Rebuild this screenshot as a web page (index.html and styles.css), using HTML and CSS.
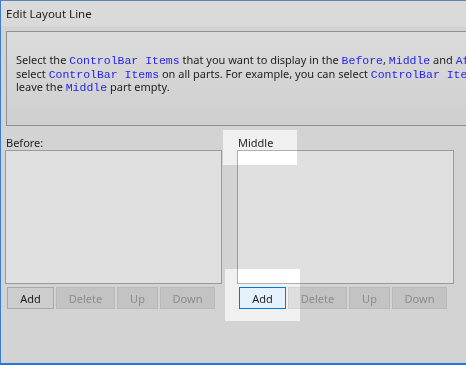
FILE: index.html
```html
<!DOCTYPE html>
<html lang="en">
<head>
    <meta charset="UTF-8">
    <title>Edit Layout Line</title>
    <link rel="stylesheet" href="styles.css">
</head>
<body>
    <div class="window">
        <div class="titlebar">Edit Layout Line</div>
        <div class="info">
            <p>Select the <code>ControlBar Items</code> that you want to display in the <code>Before</code>, <code>Middle</code> and <code>After</code> parts. You can also<br>select <code>ControlBar Items</code> on all parts. For example, you can select <code>ControlBar Items</code> in the <code>Before</code> and <code>After</code> parts and<br>leave the <code>Middle</code> part empty.</p>
        </div>
        <div class="parts">
            <div class="part">
                <div class="part-label">Before:</div>
                <div class="listbox"></div>
                <div class="buttons">
                    <button class="btn btn-add">Add</button>
                    <button class="btn btn-delete" disabled>Delete</button>
                    <button class="btn btn-up" disabled>Up</button>
                    <button class="btn btn-down" disabled>Down</button>
                </div>
            </div>
            <div class="part">
                <div class="part-label">Middle</div>
                <div class="listbox"></div>
                <div class="buttons">
                    <button class="btn btn-add focused">Add</button>
                    <button class="btn btn-delete" disabled>Delete</button>
                    <button class="btn btn-up" disabled>Up</button>
                    <button class="btn btn-down" disabled>Down</button>
                </div>
            </div>
            <div class="part">
                <div class="part-label">After:</div>
                <div class="listbox"></div>
            </div>
        </div>
    </div>

    <!-- highlight boxes over the dimmed dialog -->
    <div class="spot spot-label"></div>
    <div class="spot spot-add"></div>
</body>
</html>
```

FILE: styles.css
```css
body {
    margin: 0;
    width: 466px;
    height: 365px;
    overflow: hidden;
    position: relative;
    font-family: "Noto Sans", "Open Sans", sans-serif;
    font-size: 11px;
    color: #1e1e1e;
    background-color: #d3d3d3;
}
.window {
    width: 720px;
    height: 362px;
    border-left: 1px solid #3a7dcc;
    border-top: 1px solid #5b87b5;
    border-bottom: 2px solid #1f7ad3;
    background-color: #d3d3d3;
}
.titlebar {
    height: 25px;
    line-height: 25px;
    padding-left: 5px;
    font-size: 11.5px;
    background-color: #dadada;
    color: #241c1c;
}
.info {
    margin: 5px 0 0 5px;
    height: 93px;
    border: 1px solid #8f8f8f;
    background: linear-gradient(#dbdbdb, #cfcfcf);
}
.info p {
    margin: 0;
    padding: 21px 0 0 9px;
    line-height: 13.5px;
    white-space: nowrap;
}
code {
    font-family: "Liberation Mono", monospace;
    font-size: 11.5px;
    line-height: 1;
    color: #2626e6;
}
.parts {
    display: flex;
    gap: 15px;
    padding-left: 4px;
}
.part {
    width: 217px;
}
.part-label {
    padding: 9px 0 0 1px;
    line-height: 15px;
}
.listbox {
    height: 132px;
    border: 1px solid #9a9a9a;
    background-color: #e0e0e0;
}
.buttons {
    display: flex;
    gap: 2px;
    margin-top: 3px;
    padding-left: 2px;
}
.btn {
    height: 22px;
    padding: 0;
    font-family: inherit;
    font-size: 11px;
    color: #1b1b1b;
    border: 1px solid #a8a8a8;
    background-color: #cdcdcd;
}
.btn:disabled {
    color: #8c8c8c;
    border-color: #b9b9b9;
    background-color: #c3c3c3;
}
.btn.focused {
    border-color: rgb(0, 106, 189);
    background-color: rgb(201, 212, 221);
}
.btn-add { width: 47px; }
.btn-delete { width: 59px; }
.btn-up { width: 41px; }
.btn-down { width: 55px; }

.spot {
    position: absolute;
    background-color: rgb(31, 31, 31);
    mix-blend-mode: color-dodge;
}
.spot-label {
    left: 223px;
    top: 130px;
    width: 74px;
    height: 35px;
}
.spot-add {
    left: 225px;
    top: 269px;
    width: 75px;
    height: 52px;
}
```
